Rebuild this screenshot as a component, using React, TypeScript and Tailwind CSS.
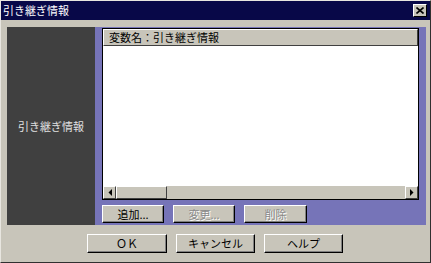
import React from "react";

const font = { fontFamily: '"MS UI Gothic","Noto Sans CJK JP","Noto Sans",sans-serif' };

function Btn({ label, className = "", disabled = false }: { label: string; className?: string; disabled?: boolean }) {
  return (
    <div
      className={`flex items-center justify-center border border-t-white border-l-white border-r-black border-b-black shadow-[inset_-1px_-1px_0_#808080] bg-[#c8c5ba] text-[11px] leading-none ${disabled ? "text-[#8a8a8a]" : "text-black"} ${className}`}
    >
      <span className={disabled ? "[text-shadow:1px_1px_0_#ffffff]" : ""}>{label}</span>
    </div>
  );
}

export default function App() {
  return (
    <div style={font} className="w-[431px] h-[263px] bg-[#c8c5ba] flex flex-col border border-t-[#e8e6e0] border-l-[#e8e6e0] border-r-[#303030] border-b-[#303030] overflow-hidden">
      {/* title bar */}
      <div className="h-[19px] bg-[#080848] flex items-center justify-between pl-[2px] pr-[3px]">
        <span className="text-white text-[11px] leading-none">引き継ぎ情報</span>
        <div className="w-[14px] h-[13px] bg-[#c8c5ba] border border-t-white border-l-white border-r-black border-b-black flex items-center justify-center">
          <svg width="8" height="7" viewBox="0 0 8 7">
            <path d="M0.5 0.5 L7.5 6.5 M7.5 0.5 L0.5 6.5" stroke="black" strokeWidth="1.6" />
          </svg>
        </div>
      </div>
      {/* main panel */}
      <div className="mt-[7px] ml-[6px] mr-[4px] h-[198px] flex">
        <div className="w-[88px] bg-[#404040] flex items-center justify-center">
          <span className="text-[#e0e0e0] text-[11px] leading-none">引き継ぎ情報</span>
        </div>
        <div className="flex-1 bg-[#7674b8] flex flex-col pl-[7px] pr-[7px] pt-[1px]">
          <div className="h-[172px] flex flex-col border border-black bg-white">
            <div className="h-[17px] bg-[#c8c5ba] border border-t-white border-l-white border-r-[#404040] border-b-[#404040] flex items-center pl-[5px]">
              <span className="text-[11px] leading-none text-black">変数名：引き継ぎ情報</span>
            </div>
            <div className="flex-1 bg-white" />
            <div className="h-[13px] bg-[#c8c5ba] flex items-stretch">
              <div className="w-[13px] border border-t-white border-l-white border-r-[#404040] border-b-[#404040] flex items-center justify-center">
                <svg width="4" height="7" viewBox="0 0 4 7"><path d="M4 0 L0.5 3.5 L4 7 Z" fill="black" /></svg>
              </div>
              <div className="w-[51px] border border-t-white border-l-white border-r-[#404040] border-b-[#404040] bg-[#c8c5ba]" />
              <div className="flex-1" />
              <div className="w-[13px] border border-t-white border-l-white border-r-[#404040] border-b-[#404040] flex items-center justify-center">
                <svg width="4" height="7" viewBox="0 0 4 7"><path d="M0 0 L3.5 3.5 L0 7 Z" fill="black" /></svg>
              </div>
            </div>
          </div>
          <div className="flex gap-[9px] mt-[5px]">
            <Btn label="追加..." className="w-[62px] h-[18px]" />
            <Btn label="変更..." className="w-[62px] h-[18px]" disabled />
            <Btn label="削除" className="w-[63px] h-[18px]" disabled />
          </div>
        </div>
      </div>
      {/* bottom buttons */}
      <div className="mt-[9px] flex gap-[9px] pl-[86px]">
        <Btn label="ＯＫ" className="w-[80px] h-[19px]" />
        <Btn label="キャンセル" className="w-[79px] h-[19px]" />
        <Btn label="ヘルプ" className="w-[79px] h-[19px]" />
      </div>
    </div>
  );
}
